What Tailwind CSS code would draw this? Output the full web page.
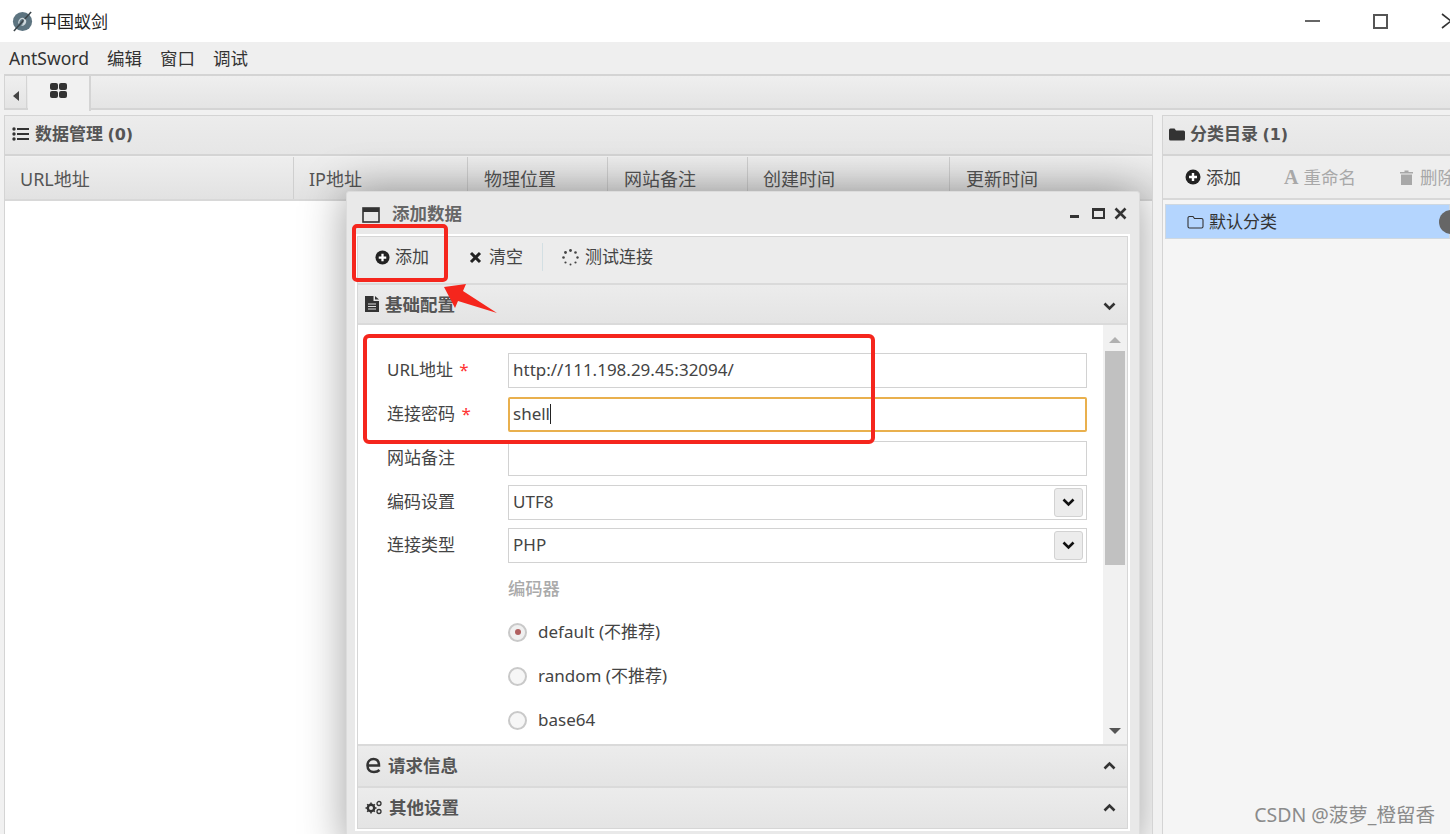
<!DOCTYPE html>
<html lang="zh-CN">
<head>
    <meta charset="UTF-8">
    <title>中国蚁剑</title>
    <script src="https://cdn.jsdelivr.net/npm/@tailwindcss/browser@4"></script>
</head>
<body class="w-[1450px] h-[834px] overflow-hidden bg-white relative font-['Noto_Sans','Noto_Sans_CJK_SC',sans-serif] text-[#444]">
    <!-- Title bar -->
    <div class="h-[42px] flex items-center bg-white">
        <svg class="ml-[11px] w-[23px] h-[23px]" viewBox="0 0 24 24">
            <circle cx="12" cy="12" r="10" fill="#5d7480"/>
            <path d="M3 22 L21 2" stroke="#3b4449" stroke-width="1.6"/>
            <path d="M8 14c0-4 3-6 5-5s1 5-1 6M11 16c3 0 5-3 4-6" fill="none" stroke="#cfd8dc" stroke-width="1.3"/>
        </svg>
        <span class="ml-[6px] text-[17px] leading-none text-[#222]">中国蚁剑</span>
        <div class="ml-auto flex items-center h-full">
            <div class="w-[15px] h-[2px] bg-[#666] mr-[53px]"></div>
            <div class="w-[15px] h-[15px] border-2 border-[#555] mr-[53px]"></div>
            <svg class="w-[9px] h-[16px]" viewBox="0 0 9 16"><path d="M1 1l9 7-9 7" fill="none" stroke="#333" stroke-width="1.6"/></svg>
        </div>
    </div>
    <!-- Menu bar -->
    <div class="h-[32px] bg-[#efefef] flex items-center pl-[9px] gap-[18px] text-[17.5px] text-[#333]">
        <span>AntSword</span><span>编辑</span><span>窗口</span><span>调试</span>
    </div>
    <!-- Main area -->
    <div class="h-[760px] bg-[#f1f1f1] pl-[4px] flex flex-col">
        <!-- Tab bar -->
        <div class="h-[36px] flex border-t-2 border-l border-b-2 border-[#d4d4d4] bg-gradient-to-b from-[#efefef] to-[#e4e4e4]">
            <div class="w-[22px] flex items-center justify-center border-r border-[#d4d4d4]">
                <div class="mt-[8px] w-0 h-0 border-y-[5px] border-y-transparent border-r-[6px] border-r-[#444]"></div>
            </div>
            <div class="ml-[1px] w-[63px] h-[35px] bg-[#f1f1f1] border-r-2 border-[#d4d4d4] flex justify-center pt-[7px]">
                <div class="grid grid-cols-2 gap-[1px] w-[17px] h-[15px]">
                    <div class="bg-[#333] rounded-[2px]"></div><div class="bg-[#333] rounded-[2px]"></div>
                    <div class="bg-[#333] rounded-[2px]"></div><div class="bg-[#333] rounded-[2px]"></div>
                </div>
            </div>
        </div>
        <div class="flex mt-[5px] flex-1 min-h-0">
            <!-- Data panel, also holds the dialog so its shadow stops at the panel edge -->
            <div class="relative overflow-hidden w-[1149px] shrink-0 flex flex-col border-l border-r border-[#d4d4d4]">
                <div class="h-[41px] border-t border-b-2 border-[#d4d4d4] flex items-center pl-[7px] pb-[2px] gap-[6px] bg-gradient-to-b from-[#ececec] to-[#e6e6e6] text-[17px] font-semibold text-[#555]">
                    <svg class="w-[17px] h-[14px]" viewBox="0 0 17 14" fill="#333">
                        <circle cx="2" cy="2" r="1.7"/><circle cx="2" cy="7" r="1.7"/><circle cx="2" cy="12" r="1.7"/>
                        <rect x="5" y="1" width="12" height="2"/><rect x="5" y="6" width="12" height="2"/><rect x="5" y="11" width="12" height="2"/>
                    </svg>
                    <span>数据管理 <span class="font-['DejaVu_Sans'] font-bold text-[16px]">(0)</span></span>
                </div>
                <div class="h-[44px] mt-[1px] flex border-b-2 border-[#d8d8d8] bg-gradient-to-b from-[#eeeeee] to-[#e2e2e2] text-[18px] text-[#555]">
                    <div class="w-[289px] pl-[15px] pt-[9px] border-r border-[#cfcfcf]">URL地址</div>
                    <div class="w-[174px] pl-[15px] pt-[9px] border-r border-[#cfcfcf]">IP地址</div>
                    <div class="w-[140px] pl-[16px] pt-[9px] border-r border-[#cfcfcf]">物理位置</div>
                    <div class="w-[140px] pl-[16px] pt-[9px] border-r border-[#cfcfcf]">网站备注</div>
                    <div class="w-[202px] pl-[15px] pt-[9px] border-r border-[#cfcfcf]">创建时间</div>
                    <div class="flex-1 pl-[16px] pt-[9px]">更新时间</div>
                </div>
                <div class="flex-1 bg-white"></div>

                <!-- Add data dialog -->
                <div class="absolute left-[341px] top-[76px] w-[794px] h-[660px] bg-[#e9e9e9] border border-[#dcdcdc] rounded-t-[3px] shadow-[0_0_45px_rgba(0,0,0,0.38)] flex flex-col px-[10px]">
                    <div class="h-[44px] flex items-center shrink-0 pb-[2px] text-[17.5px] font-semibold text-[#666]">
                        <svg class="ml-[5px] w-[18px] h-[16px] mt-[3px]" viewBox="0 0 18 16"><rect x="1" y="1" width="16" height="14" fill="none" stroke="#333" stroke-width="1.600"/><rect x="1" y="1" width="16" height="4" fill="#333"/></svg>
                        <span class="ml-[12px]">添加数据</span>
                        <div class="ml-auto flex items-center text-[#333]">
                            <div class="w-[9px] h-[3px] bg-[#333] mt-[7px] mr-[13px]"></div>
                            <div class="w-[13px] h-[11px] border-2 border-t-[3px] border-[#333] mr-[9px]"></div>
                            <svg class="w-[13px] h-[13px] mr-[2px]" viewBox="0 0 13 13"><path d="M1.500 1.500l10 10M11.500 1.500l-10 10" stroke="#333" stroke-width="2.600"/></svg>
                        </div>
                    </div>
                    <div class="w-[771px] flex flex-col border border-[#d6d6d6] bg-white shadow-[0_0_0_2px_#fff]">
                        <!-- Toolbar -->
                        <div class="h-[46px] flex items-center pb-[6px] bg-[#ececec] text-[17px] text-[#444]">
                            <div class="pl-[17px] flex items-center gap-[5px] w-[94px]">
                                <svg class="w-[15px] h-[15px]" viewBox="0 0 16 16"><circle cx="8" cy="8" r="7.500" fill="#222"/><path d="M8 4v8M4 8h8" stroke="#fff" stroke-width="2.400"/></svg>
                                <span>添加</span>
                            </div>
                            <div class="pl-[17px] flex items-center gap-[7px] w-[91px] border-r border-[#d3dfe3] h-[28px]">
                                <svg class="w-[13px] h-[13px]" viewBox="0 0 13 13"><path d="M2 2l9 9M11 2l-9 9" stroke="#222" stroke-width="3"/></svg>
                                <span>清空</span>
                            </div>
                            <div class="pl-[19px] flex items-center gap-[6px]">
                                <svg class="w-[17px] h-[17px]" viewBox="0 0 17 17" fill="#444">
                                    <circle cx="8.500" cy="1.500" r="1.400"/><circle cx="13.500" cy="3.500" r="1.300"/><circle cx="15.500" cy="8.500" r="1.200"/><circle cx="13.500" cy="13.500" r="1.100"/><circle cx="8.500" cy="15.500" r="1"/><circle cx="3.500" cy="13.500" r="1.100"/><circle cx="1.500" cy="8.500" r="1.300"/><circle cx="3.500" cy="3.500" r="1.400"/>
                                </svg>
                                <span>测试连接</span>
                            </div>
                        </div>
                        <!-- Basic config header -->
                        <div class="h-[42px] flex items-center border-y-2 border-[#dadada] bg-gradient-to-b from-[#ececec] to-[#e4e4e4] pl-[7px] pr-[11px] text-[17.5px] font-semibold text-[#555]">
                            <svg class="w-[14px] h-[16px]" viewBox="0 0 14 16" fill="#333"><path d="M0 0h8.500v5H14v11H0z"/><path d="M10 0l4 3.500h-4z"/><path d="M3 8h8M3 10.500h8M3 13h8" stroke="#ddd" stroke-width="1"/></svg>
                            <span class="ml-[6px]">基础配置</span>
                            <svg class="ml-auto w-[13px] h-[9px] mt-[4px]" viewBox="0 0 13 9"><path d="M1.500 1.500l5 5 5-5" fill="none" stroke="#333" stroke-width="2.600"/></svg>
                        </div>
                        <!-- Form area -->
                        <div class="h-[419px] flex bg-white overflow-hidden">
                            <div class="w-[746px] pt-[28px] pl-[29px] text-[17px] text-[#444]">
                                <div class="flex items-center h-[34px]">
                                    <span class="w-[121px]">URL地址 <span class="text-[#f33] ml-[2px]">*</span></span>
                                    <div class="w-[579px] h-[35px] border border-[#d2d2d2] pl-[4px] flex items-center">http://111.198.29.45:32094/</div>
                                </div>
                                <div class="flex items-center h-[34px] mt-[10px]">
                                    <span class="w-[121px]">连接密码 <span class="text-[#f33] ml-[2px]">*</span></span>
                                    <div class="w-[579px] h-[35px] border-2 border-[#e9b04d] rounded-[2px] pl-[3px] flex items-center">shell<span class="w-px h-[20px] bg-[#222]"></span></div>
                                </div>
                                <div class="flex items-center h-[34px] mt-[10px]">
                                    <span class="w-[121px]">网站备注</span>
                                    <div class="w-[579px] h-[35px] border border-[#d2d2d2]"></div>
                                </div>
                                <div class="flex items-center h-[34px] mt-[10px]">
                                    <span class="w-[121px]">编码设置</span>
                                    <div class="w-[579px] h-[35px] border border-[#d2d2d2] pl-[4px] flex items-center justify-between pr-[3px]">
                                        <span>UTF8</span>
                                        <div class="w-[29px] h-[29px] bg-[#ececec] border border-[#d2d2d2] rounded-[3px] flex items-center justify-center">
                                            <svg class="w-[13px] h-[9px]" viewBox="0 0 13 9"><path d="M1.500 1.500l5 5 5-5" fill="none" stroke="#111" stroke-width="2.600"/></svg>
                                        </div>
                                    </div>
                                </div>
                                <div class="flex items-center h-[34px] mt-[9px]">
                                    <span class="w-[121px]">连接类型</span>
                                    <div class="w-[579px] h-[35px] border border-[#d2d2d2] pl-[4px] flex items-center justify-between pr-[3px]">
                                        <span>PHP</span>
                                        <div class="w-[29px] h-[29px] bg-[#ececec] border border-[#d2d2d2] rounded-[3px] flex items-center justify-center">
                                            <svg class="w-[13px] h-[9px]" viewBox="0 0 13 9"><path d="M1.500 1.500l5 5 5-5" fill="none" stroke="#111" stroke-width="2.600"/></svg>
                                        </div>
                                    </div>
                                </div>
                                <div class="ml-[121px] mt-[15px] text-[17.300px] font-medium text-[#aaa] leading-[24px]">编码器</div>
                                <div class="ml-[121px] mt-[18px] flex items-center h-[26px] gap-[11px]">
                                    <div class="w-[19px] h-[19px] rounded-full border-2 border-[#c9c9c9] bg-[#f0f0f0] flex items-center justify-center"><div class="w-[6px] h-[6px] rounded-full bg-[#b06060]"></div></div>
                                    <span>default (不推荐)</span>
                                </div>
                                <div class="ml-[121px] mt-[18px] flex items-center h-[26px] gap-[11px]">
                                    <div class="w-[19px] h-[19px] rounded-full border-2 border-[#c9c9c9] bg-[#f6f6f6]"></div>
                                    <span>random (不推荐)</span>
                                </div>
                                <div class="ml-[121px] mt-[18px] flex items-center h-[26px] gap-[11px]">
                                    <div class="w-[19px] h-[19px] rounded-full border-2 border-[#c9c9c9] bg-[#f6f6f6]"></div>
                                    <span>base64</span>
                                </div>
                            </div>
                            <!-- Scrollbar -->
                            <div class="w-[24px] bg-[#f1f1f1] flex flex-col items-center">
                                <div class="mt-[12px] w-0 h-0 border-x-[6px] border-x-transparent border-b-[6px] border-b-[#b0b0b0]"></div>
                                <div class="mt-[8px] w-[20px] h-[214px] bg-[#c1c1c1]"></div>
                                <div class="mt-[163px] w-0 h-0 border-x-[6px] border-x-transparent border-t-[6px] border-t-[#555]"></div>
                            </div>
                        </div>
                        <!-- Request info -->
                        <div class="h-[42px] flex items-center pb-[2px] border-t-2 border-[#dadada] bg-gradient-to-b from-[#ececec] to-[#e4e4e4] pl-[8px] pr-[11px] text-[17.5px] font-semibold text-[#555]">
                            <svg class="w-[15px] h-[17px]" viewBox="0 0 15 17"><path d="M2 8.500H13C13 4.500 11 2 7.500 2S1.500 4.500 1.500 8.500 4 15 8 15C10 15 12 14.500 13.500 13" fill="none" stroke="#333" stroke-width="2.500"/></svg>
                            <span class="ml-[7px]">请求信息</span>
                            <svg class="ml-auto w-[13px] h-[9px]" viewBox="0 0 13 9"><path d="M1.500 7.500l5-5 5 5" fill="none" stroke="#333" stroke-width="2.600"/></svg>
                        </div>
                        <!-- Other settings -->
                        <div class="h-[42px] flex items-center pb-[2px] border-t-2 border-[#dadada] bg-gradient-to-b from-[#ececec] to-[#e4e4e4] pl-[7px] pr-[11px] text-[17.5px] font-semibold text-[#555]">
                            <svg class="w-[18px] h-[15px]" viewBox="0 0 18 15" fill="none" stroke="#333">
                                <circle cx="6" cy="8" r="3.200" stroke-width="2.400"/>
                                <path d="M6 2.500v2M6 11.500v2M.500 8h2M9.500 8h2M2.200 4.200l1.400 1.400M8.400 10.400l1.400 1.400M2.200 11.800l1.400-1.400M8.400 5.600l1.400-1.400" stroke-width="1.500"/>
                                <circle cx="14" cy="3.500" r="2" stroke-width="1.300"/><circle cx="14" cy="11.500" r="2" stroke-width="1.300"/>
                            </svg>
                            <span class="ml-[6px]">其他设置</span>
                            <svg class="ml-auto w-[13px] h-[9px]" viewBox="0 0 13 9"><path d="M1.500 7.500l5-5 5 5" fill="none" stroke="#333" stroke-width="2.600"/></svg>
                        </div>
                    </div>
                </div>
            </div>
            <!-- Category panel -->
            <div class="ml-[9px] flex-1 min-w-0 flex flex-col border-l border-[#d4d4d4] bg-[#f5f5f5]">
                <div class="h-[41px] border-t border-b-2 border-[#d4d4d4] flex items-center pl-[6px] pb-[2px] gap-[5px] bg-gradient-to-b from-[#ececec] to-[#e6e6e6] text-[17px] font-semibold text-[#555]">
                    <svg class="w-[16px] h-[13px]" viewBox="0 0 16 13" fill="#333"><path d="M0 2a1.500 1.500 0 0 1 1.500-1.500h4l1.500 2h7.500A1.500 1.500 0 0 1 16 4v7a1.500 1.500 0 0 1-1.500 1.500h-13A1.500 1.500 0 0 1 0 11z"/></svg>
                    <span>分类目录 <span class="font-['DejaVu_Sans'] font-bold text-[16px]">(1)</span></span>
                </div>
                <div class="h-[44px] flex items-center border-b-2 border-[#d8d8d8] bg-[#eeeeee] text-[17.5px] whitespace-nowrap overflow-hidden">
                    <div class="pl-[22px] flex items-center gap-[5px] text-[#444] w-[95px] shrink-0">
                        <svg class="w-[16px] h-[16px]" viewBox="0 0 16 16"><circle cx="8" cy="8" r="7.500" fill="#222"/><path d="M8 4v8M4 8h8" stroke="#fff" stroke-width="2.400"/></svg>
                        <span>添加</span>
                    </div>
                    <div class="w-px h-[28px] bg-[#cfdde2]"></div>
                    <div class="pl-[26px] flex items-center gap-[5px] text-[#a8a8a8] w-[117px] shrink-0">
                        <span class="font-['Liberation_Serif'] font-bold text-[20px] leading-none">A</span>
                        <span>重命名</span>
                    </div>
                    <div class="w-px h-[28px] bg-[#cfdde2]"></div>
                    <div class="pl-[25px] flex items-center gap-[7px] text-[#a8a8a8] shrink-0">
                        <svg class="w-[13px] h-[15px]" viewBox="0 0 13 15" fill="#a8a8a8"><path d="M0 2h4.500V.500h4V2H13v1.500H0zM1 4.500h11V15H1z"/></svg>
                        <span>删除</span>
                    </div>
                </div>
                <div class="mt-[4px] ml-[2px] h-[35px] bg-[#b4d5fe] border border-[#cfd8e0] flex items-center pl-[21px] gap-[5px] text-[17px] text-[#333] relative">
                    <svg class="w-[17px] h-[14px]" viewBox="0 0 17 14" fill="none" stroke="#333" stroke-width="1.100"><path d="M1 3a1.500 1.500 0 0 1 1.500-1.500h3.500l1.500 2h7A1.500 1.500 0 0 1 16 5v6.500a1.500 1.500 0 0 1-1.500 1.500h-12A1.500 1.500 0 0 1 1 11.500z"/></svg>
                    <span>默认分类</span>
                    <div class="absolute right-[-14px] top-[5px] w-[24px] h-[24px] rounded-full bg-[#666]"></div>
                </div>
            </div>
        </div>
    </div>

    <!-- Red annotations over the screenshot -->
    <div class="absolute left-[352px] top-[224px] w-[96px] h-[58px] border-[4px] border-[#f5261d] rounded-[5px]"></div>
    <div class="absolute left-[363px] top-[334px] w-[512px] h-[110px] border-[4px] border-[#f5261d] rounded-[6px]"></div>
    <svg class="absolute left-[444px] top-[284px] w-[54px] h-[30px]" viewBox="0 0 54 30"><path d="M0 3L22 0 19 7 53 29 14 17 11 24z" fill="#f5261d"/></svg>

    <!-- Watermark -->
    <div class="absolute right-[15px] top-[803px] text-[19.500px] leading-[24px] text-[#8b8b8b]">CSDN @菠萝_橙留香</div>
</body>
</html>
